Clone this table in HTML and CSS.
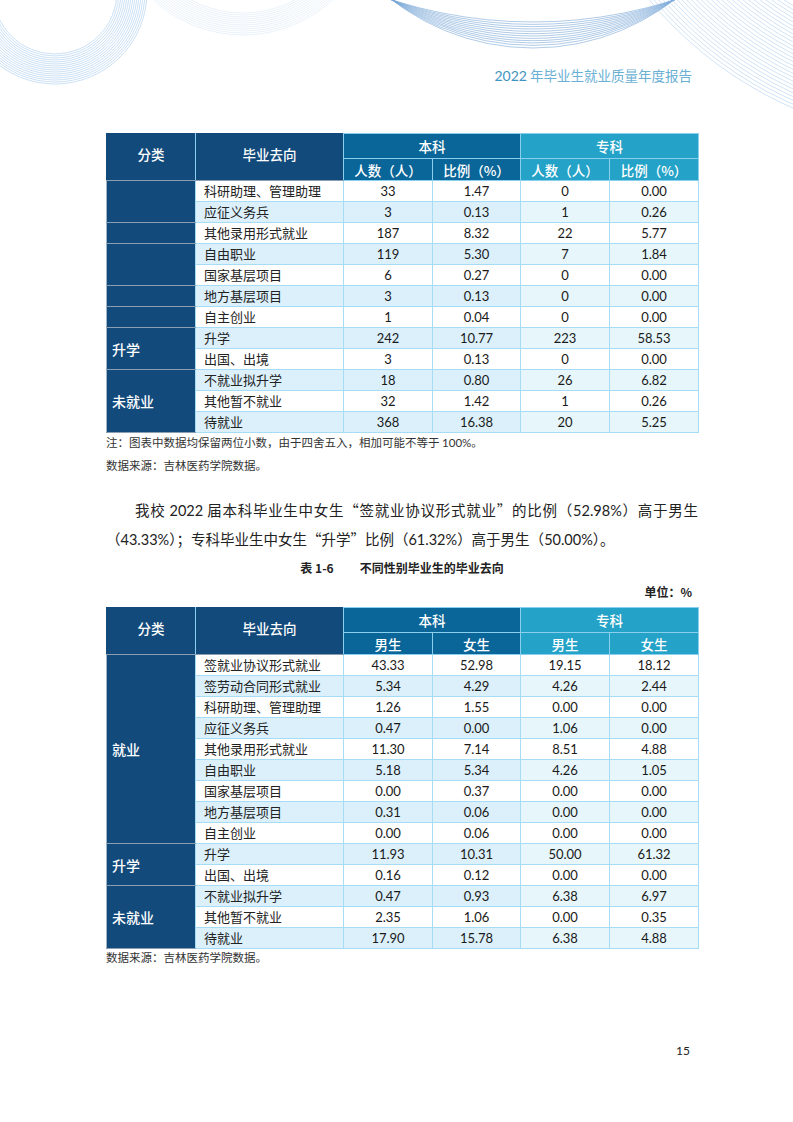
FILE: index.html
```html
<!DOCTYPE html>
<html lang="zh">
<head>
<meta charset="utf-8">
<title>2022 年毕业生就业质量年度报告</title>
<link rel="stylesheet" href="styles.css">
</head>
<body>
<div class="page">
  <svg class="deco" width="793" height="130" viewBox="0 0 793 130" xmlns="http://www.w3.org/2000/svg">
    <g fill="none" stroke="#a7cbee" stroke-width="0.6">
      <circle cx="55" cy="-8" r="62"/><circle cx="55" cy="-8" r="64"/><circle cx="55" cy="-8" r="66"/>
      <circle cx="55" cy="-8" r="68"/><circle cx="55" cy="-8" r="70"/><circle cx="55" cy="-8" r="72"/>
      <circle cx="55" cy="-8" r="74"/><circle cx="55" cy="-8" r="76"/><circle cx="55" cy="-8" r="78"/>
      <circle cx="55" cy="-8" r="80"/><circle cx="55" cy="-8" r="82"/><circle cx="55" cy="-8" r="84"/>
      <circle cx="55" cy="-8" r="86"/><circle cx="55" cy="-8" r="88"/><circle cx="55" cy="-8" r="90"/>
      <circle cx="55" cy="-8" r="92"/>
    </g>
    <g fill="none" stroke="#dce9f7" stroke-width="0.6">
      <circle cx="243" cy="-97" r="110"/><circle cx="243" cy="-97" r="112"/><circle cx="243" cy="-97" r="114"/>
      <circle cx="243" cy="-97" r="116"/><circle cx="243" cy="-97" r="118"/><circle cx="243" cy="-97" r="120"/>
      <circle cx="243" cy="-97" r="122"/><circle cx="243" cy="-97" r="124"/><circle cx="243" cy="-97" r="126"/>
      <circle cx="243" cy="-97" r="128"/><circle cx="243" cy="-97" r="130"/><circle cx="243" cy="-97" r="132"/>
    </g>
    <g fill="none" stroke="#7ba7d7" stroke-width="0.6">
      <circle cx="533" cy="-440.8" r="462.8"/><circle cx="533" cy="-395.2" r="419.6"/><circle cx="533" cy="-359" r="385.7"/>
      <circle cx="533" cy="-328.3" r="357.3"/><circle cx="533" cy="-300.9" r="332.3"/><circle cx="533" cy="-278.1" r="311.8"/>
      <circle cx="533" cy="-258.1" r="294.1"/><circle cx="533" cy="-239.7" r="278.1"/><circle cx="533" cy="-223.9" r="264.6"/>
      <circle cx="533" cy="-209.7" r="252.7"/><circle cx="533" cy="-196.3" r="241.7"/><circle cx="533" cy="-183.1" r="231.1"/>
    </g>
    <g fill="none" stroke="#a9ccee" stroke-width="0.55">
      <circle cx="950" cy="-250" r="300"/><circle cx="950" cy="-250" r="303.5"/><circle cx="950" cy="-250" r="307"/>
      <circle cx="950" cy="-250" r="310.5"/><circle cx="950" cy="-250" r="314"/><circle cx="950" cy="-250" r="317.5"/>
      <circle cx="950" cy="-250" r="321"/><circle cx="950" cy="-250" r="324.5"/><circle cx="950" cy="-250" r="328"/>
      <circle cx="950" cy="-250" r="331.5"/><circle cx="950" cy="-250" r="335"/><circle cx="950" cy="-250" r="338.5"/>
      <circle cx="950" cy="-250" r="342"/><circle cx="950" cy="-250" r="345.5"/><circle cx="950" cy="-250" r="349"/>
      <circle cx="950" cy="-250" r="352.5"/><circle cx="950" cy="-250" r="356"/><circle cx="950" cy="-250" r="359.5"/>
      <circle cx="950" cy="-250" r="363"/><circle cx="950" cy="-250" r="366.5"/><circle cx="950" cy="-250" r="370"/>
      <circle cx="950" cy="-250" r="373.5"/><circle cx="950" cy="-250" r="377"/><circle cx="950" cy="-250" r="380.5"/>
      <circle cx="950" cy="-250" r="384"/><circle cx="950" cy="-250" r="387.5"/><circle cx="950" cy="-250" r="391"/>
    </g>
  </svg>

  <header class="head"><span class="yr">2022</span> 年毕业生就业质量年度报告</header>

  <main class="content">
    <table class="grid t1">
      <colgroup><col class="c1"><col class="c2"><col class="c3"><col class="c4"><col class="c5"><col class="c6"></colgroup>
      <thead>
        <tr class="h1">
          <th rowspan="2" class="dk">分类</th>
          <th rowspan="2" class="dk">毕业去向</th>
          <th colspan="2" class="bk">本科</th>
          <th colspan="2" class="zk">专科</th>
        </tr>
        <tr class="h2">
          <th class="bk">人数（人）</th><th class="bk">比例（%）</th>
          <th class="zk">人数（人）</th><th class="zk">比例（%）</th>
        </tr>
      </thead>
      <tbody>
        <tr><td rowspan="2" class="cat"></td><td class="name">科研助理、管理助理</td><td>33</td><td>1.47</td><td class="z">0</td><td class="z">0.00</td></tr>
        <tr class="alt"><td class="name">应征义务兵</td><td>3</td><td>0.13</td><td class="z">1</td><td class="z">0.26</td></tr>
        <tr><td class="cat sub"></td><td class="name">其他录用形式就业</td><td>187</td><td>8.32</td><td class="z">22</td><td class="z">5.77</td></tr>
        <tr class="alt"><td rowspan="2" class="cat sub"></td><td class="name">自由职业</td><td>119</td><td>5.30</td><td class="z">7</td><td class="z">1.84</td></tr>
        <tr><td class="name">国家基层项目</td><td>6</td><td>0.27</td><td class="z">0</td><td class="z">0.00</td></tr>
        <tr class="alt"><td class="cat sub"></td><td class="name">地方基层项目</td><td>3</td><td>0.13</td><td class="z">0</td><td class="z">0.00</td></tr>
        <tr><td class="cat sub"></td><td class="name">自主创业</td><td>1</td><td>0.04</td><td class="z">0</td><td class="z">0.00</td></tr>
        <tr class="alt"><td rowspan="2" class="cat grp">升学</td><td class="name">升学</td><td>242</td><td>10.77</td><td class="z">223</td><td class="z">58.53</td></tr>
        <tr><td class="name">出国、出境</td><td>3</td><td>0.13</td><td class="z">0</td><td class="z">0.00</td></tr>
        <tr class="alt"><td rowspan="3" class="cat grp">未就业</td><td class="name">不就业拟升学</td><td>18</td><td>0.80</td><td class="z">26</td><td class="z">6.82</td></tr>
        <tr><td class="name">其他暂不就业</td><td>32</td><td>1.42</td><td class="z">1</td><td class="z">0.26</td></tr>
        <tr class="alt"><td class="name">待就业</td><td>368</td><td>16.38</td><td class="z">20</td><td class="z">5.25</td></tr>
      </tbody>
    </table>
    <p class="note n1">注：图表中数据均保留两位小数，由于四舍五入，相加可能不等于 <span class="num">100%</span>。</p>
    <p class="note n2">数据来源：吉林医药学院数据。</p>

    <p class="para"><span class="l1">我校 <span class="num">2022</span> 届本科毕业生中女生“签就业协议形式就业”的比例（<span class="num">52.98%</span>）高于男生</span><span class="l2">（<span class="num">43.33%</span>）；专科毕业生中女生“升学”比例（<span class="num">61.32%</span>）高于男生（<span class="num">50.00%</span>）。</span></p>

    <p class="caption"><span class="cap-no">表 1-6</span>不同性别毕业生的毕业去向</p>
    <p class="unit">单位：%</p>

    <table class="grid t2">
      <colgroup><col class="c1"><col class="c2"><col class="c3"><col class="c4"><col class="c5"><col class="c6"></colgroup>
      <thead>
        <tr class="h1">
          <th rowspan="2" class="dk">分类</th>
          <th rowspan="2" class="dk">毕业去向</th>
          <th colspan="2" class="bk">本科</th>
          <th colspan="2" class="zk">专科</th>
        </tr>
        <tr class="h2">
          <th class="bk">男生</th><th class="bk">女生</th>
          <th class="zk">男生</th><th class="zk">女生</th>
        </tr>
      </thead>
      <tbody>
        <tr><td rowspan="9" class="cat grp">就业</td><td class="name">签就业协议形式就业</td><td>43.33</td><td>52.98</td><td class="z">19.15</td><td class="z">18.12</td></tr>
        <tr class="alt"><td class="name">签劳动合同形式就业</td><td>5.34</td><td>4.29</td><td class="z">4.26</td><td class="z">2.44</td></tr>
        <tr><td class="name">科研助理、管理助理</td><td>1.26</td><td>1.55</td><td class="z">0.00</td><td class="z">0.00</td></tr>
        <tr class="alt"><td class="name">应征义务兵</td><td>0.47</td><td>0.00</td><td class="z">1.06</td><td class="z">0.00</td></tr>
        <tr><td class="name">其他录用形式就业</td><td>11.30</td><td>7.14</td><td class="z">8.51</td><td class="z">4.88</td></tr>
        <tr class="alt"><td class="name">自由职业</td><td>5.18</td><td>5.34</td><td class="z">4.26</td><td class="z">1.05</td></tr>
        <tr><td class="name">国家基层项目</td><td>0.00</td><td>0.37</td><td class="z">0.00</td><td class="z">0.00</td></tr>
        <tr class="alt"><td class="name">地方基层项目</td><td>0.31</td><td>0.06</td><td class="z">0.00</td><td class="z">0.00</td></tr>
        <tr><td class="name">自主创业</td><td>0.00</td><td>0.06</td><td class="z">0.00</td><td class="z">0.00</td></tr>
        <tr class="alt"><td rowspan="2" class="cat grp">升学</td><td class="name">升学</td><td>11.93</td><td>10.31</td><td class="z">50.00</td><td class="z">61.32</td></tr>
        <tr><td class="name">出国、出境</td><td>0.16</td><td>0.12</td><td class="z">0.00</td><td class="z">0.00</td></tr>
        <tr class="alt"><td rowspan="3" class="cat grp">未就业</td><td class="name">不就业拟升学</td><td>0.47</td><td>0.93</td><td class="z">6.38</td><td class="z">6.97</td></tr>
        <tr><td class="name">其他暂不就业</td><td>2.35</td><td>1.06</td><td class="z">0.00</td><td class="z">0.35</td></tr>
        <tr class="alt"><td class="name">待就业</td><td>17.90</td><td>15.78</td><td class="z">6.38</td><td class="z">4.88</td></tr>
      </tbody>
    </table>
    <p class="note n3">数据来源：吉林医药学院数据。</p>
  </main>

  <footer class="pageno">15</footer>
</div>
</body>
</html>
```

FILE: styles.css
```css
* { box-sizing: border-box; }

body {
  margin: 0;
  background: #ffffff;
  font-family: "Noto Sans CJK SC", "Noto Sans", sans-serif;
  color: #222222;
}

.page {
  position: relative;
  width: 793px;
  height: 1122px;
  overflow: hidden;
}

.deco {
  position: absolute;
  left: 0;
  top: 0;
}

.head {
  position: relative;
  padding: 66px 101px 0 0;
  height: 133px;
  text-align: right;
  font-size: 13.5px;
  line-height: 18px;
  color: #6ab0d5;
  font-family: "Noto Sans CJK SC", sans-serif;
}

.head .yr {
  font-family: "Lato", "Liberation Sans", sans-serif;
  color: #3f93c2;
  font-size: 14px;
}

.content {
  padding: 0 95px 0 106px;
}

.grid {
  border-collapse: collapse;
  table-layout: fixed;
  width: 592px;
}

.c1 { width: 89px; }
.c2 { width: 148px; }
.c3 { width: 89px; }
.c4 { width: 88px; }
.c5 { width: 89px; }
.c6 { width: 89px; }

.grid th,
.grid td {
  border: 1px solid #a6dcf5;
  padding: 0;
  line-height: 18px;
}

.grid th {
  color: #ffffff;
  font-weight: 500;
  font-size: 13.5px;
  text-align: center;
}

.grid tr.h1 { height: 25px; }
.grid tr.h2 { height: 22px; }
.grid tbody tr { height: 21px; }

.grid th.dk {
  background: #124a7c;
  border-color: #124a7c #8ad0ee #8a9fb3 #124a7c;
  padding-bottom: 6px;
}

.grid th.bk {
  background: #0a6698;
  border-color: #8ad0ee;
}

.grid th.zk {
  background: #24a2c7;
  border-color: #8ad0ee;
}

.grid td {
  text-align: center;
  font-family: "Lato", "Liberation Sans", sans-serif;
  font-size: 13px;
  color: #1a1a1a;
  background: #ffffff;
}

.grid tr.alt td { background: #dcf0fb; }
.grid tr.alt td.z { background: #e6f6fb; }

.grid td.name {
  text-align: left;
  padding-left: 8px;
  font-family: "Noto Sans CJK SC", sans-serif;
  font-size: 13px;
  color: #222222;
}

.grid td.cat,
.grid tr.alt td.cat {
  background: #124a7c;
  color: #ffffff;
  text-align: left;
  padding-left: 5px;
  font-family: "Noto Sans CJK SC", sans-serif;
  font-weight: 500;
  font-size: 14px;
  border-left-color: #9fb4c8;
  border-top-color: #8a9fb3;
  border-bottom-color: #8a9fb3;
}

.grid td.cat.sub {
  border-top-color: #2c5c88;
}

.note {
  margin: 0;
  font-size: 11.5px;
  line-height: 18px;
  color: #333333;
}

.note .num {
  font-family: "Lato", "Liberation Sans", sans-serif;
}

.n2 { margin-top: 4px; }
.n3 { line-height: 16px; }

.para {
  margin: 22px 0 0;
  font-size: 14.5px;
  line-height: 28px;
  color: #222222;
  text-align: justify;
}

.para .num {
  font-family: "Lato", "Liberation Sans", sans-serif;
}

.para .l1 {
  display: block;
  text-indent: 2em;
  text-align: justify;
  text-align-last: justify;
}

.para .l2 {
  display: block;
}

.caption {
  margin: 4px 0 0;
  text-align: center;
  font-size: 12px;
  line-height: 20px;
  font-weight: 700;
  color: #222222;
}

.cap-no {
  margin-right: 26px;
}

.unit {
  margin: 4px 0 5px;
  text-align: right;
  padding-right: 6px;
  font-size: 12px;
  line-height: 20px;
  font-weight: 700;
  color: #222222;
}

.pageno {
  position: absolute;
  left: 0;
  right: 0;
  top: 1042px;
  padding-right: 103px;
  text-align: right;
  font-family: "Lato", "Liberation Sans", sans-serif;
  font-size: 12px;
  line-height: 18px;
  color: #222222;
}
```
